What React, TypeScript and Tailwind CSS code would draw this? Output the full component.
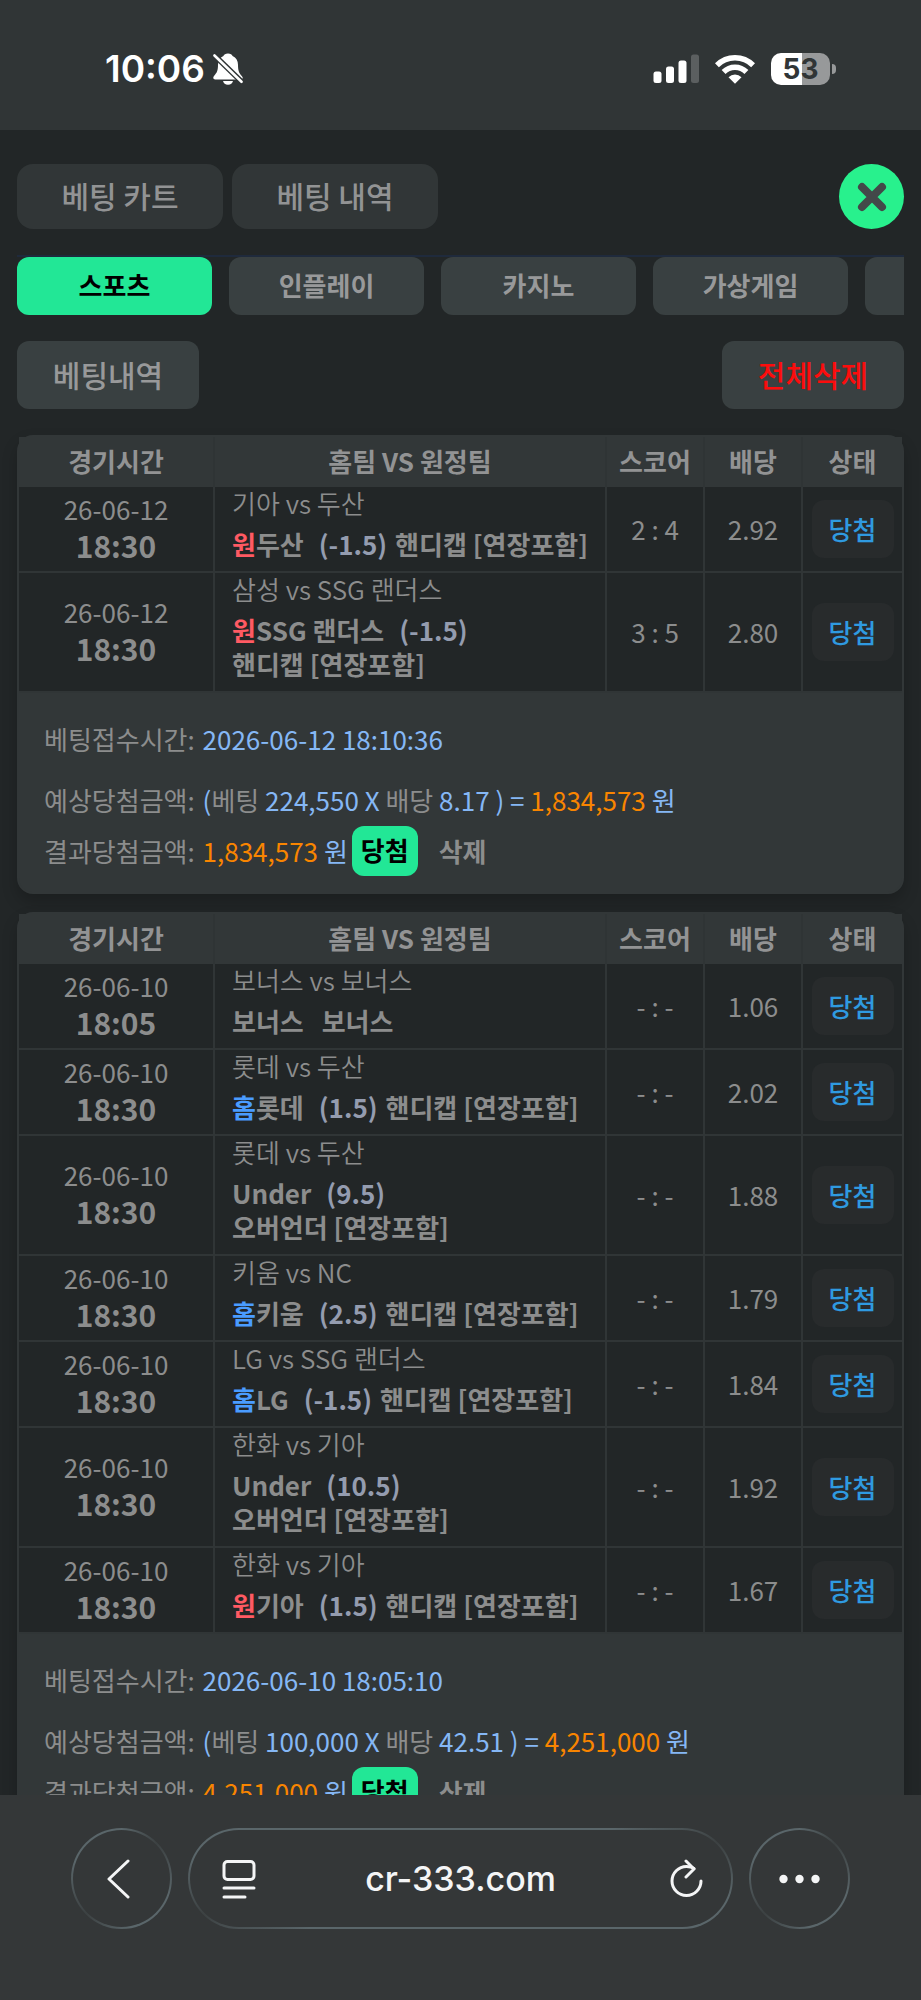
import { clsx } from "clsx";

type Side = "home" | "away";

type Pick = {
  date: string;
  time: string;
  match: string;
  side?: Side;
  team: string;
  line?: string;
  market: string;
  score: string;
  odds: string;
};

type Slip = {
  picks: Pick[];
  placedAt: string;
  stake: string;
  totalOdds: string;
  payout: string;
};

const HANDICAP = "핸디캡 [연장포함]";
const OVER_UNDER = "오버언더 [연장포함]";

const slips: Slip[] = [
  {
    picks: [
      { date: "26-06-12", time: "18:30", match: "기아 vs 두산", side: "away", team: "두산", line: "(-1.5)", market: HANDICAP, score: "2 : 4", odds: "2.92" },
      { date: "26-06-12", time: "18:30", match: "삼성 vs SSG 랜더스", side: "away", team: "SSG 랜더스", line: "(-1.5)", market: HANDICAP, score: "3 : 5", odds: "2.80" },
    ],
    placedAt: "2026-06-12 18:10:36",
    stake: "224,550",
    totalOdds: "8.17",
    payout: "1,834,573",
  },
  {
    picks: [
      { date: "26-06-10", time: "18:05", match: "보너스 vs 보너스", team: "보너스", market: "보너스", score: "- : -", odds: "1.06" },
      { date: "26-06-10", time: "18:30", match: "롯데 vs 두산", side: "home", team: "롯데", line: "(1.5)", market: HANDICAP, score: "- : -", odds: "2.02" },
      { date: "26-06-10", time: "18:30", match: "롯데 vs 두산", team: "Under", line: "(9.5)", market: OVER_UNDER, score: "- : -", odds: "1.88" },
      { date: "26-06-10", time: "18:30", match: "키움 vs NC", side: "home", team: "키움", line: "(2.5)", market: HANDICAP, score: "- : -", odds: "1.79" },
      { date: "26-06-10", time: "18:30", match: "LG vs SSG 랜더스", side: "home", team: "LG", line: "(-1.5)", market: HANDICAP, score: "- : -", odds: "1.84" },
      { date: "26-06-10", time: "18:30", match: "한화 vs 기아", team: "Under", line: "(10.5)", market: OVER_UNDER, score: "- : -", odds: "1.92" },
      { date: "26-06-10", time: "18:30", match: "한화 vs 기아", side: "away", team: "기아", line: "(1.5)", market: HANDICAP, score: "- : -", odds: "1.67" },
    ],
    placedAt: "2026-06-10 18:05:10",
    stake: "100,000",
    totalOdds: "42.51",
    payout: "4,251,000",
  },
];

const tabs = ["스포츠", "인플레이", "카지노", "가상게임", ""];

function StatusBar() {
  return (
    <div className="flex h-[130px] shrink-0 items-center justify-between bg-[#303536] pt-2 pr-[85px] pl-[105px] font-['Inter',sans-serif] text-white">
      <div className="flex items-center gap-2">
        <span className="text-[37px] leading-10 font-semibold">10:06</span>
        <svg width="30" height="32" viewBox="0 0 30 32">
          <path
            d="M15 0.5c-2.500 0-4 1-4.600 2.400C6.800 4.400 5 7.600 5 11.800c0 6-1.200 8-3.400 10.400C0.600 23.300 0.300 24 0.300 24.700c0 1 0.800 1.700 1.900 1.700h25.600c1.100 0 1.900-0.700 1.900-1.700 0-0.700-0.500-1.400-1.700-2.500C26 19.800 25 17.800 25 11.800c0-4.200-1.800-7.400-5.400-8.900C19 1.500 17.500 0.500 15 0.500z"
            fill="#fff"
          />
          <path d="M10 28h10c-0.500 2.400-2.300 3.800-5 3.800s-4.500-1.400-5-3.800z" fill="#fff" />
          <path d="M-1 0L31 31" stroke="#303536" strokeWidth="5.500" />
          <path d="M1.500 2.500L28.500 28.800" stroke="#fff" strokeWidth="2.600" strokeLinecap="round" />
        </svg>
      </div>
      <div className="flex items-center gap-4">
        <svg width="46" height="30" viewBox="0 0 46 30">
          <rect x="0.500" y="17.500" width="8" height="11.500" rx="2.500" fill="#fff" />
          <rect x="13" y="12.500" width="8" height="16.500" rx="2.500" fill="#fff" />
          <rect x="25.500" y="6.500" width="8" height="22.500" rx="2.500" fill="#fff" />
          <rect x="38" y="0.500" width="8" height="28.500" rx="2.500" fill="#5b5f60" />
        </svg>
        <svg width="40" height="30" viewBox="0 0 40 30">
          <g fill="none" stroke="#fff" strokeWidth="5.500">
            <path d="M1.900 11.200a25.500 25.500 0 0 1 36.200 0" />
            <path d="M8.600 18a16 16 0 0 1 22.800 0" />
          </g>
          <path d="M13.500 23.200a9.200 9.200 0 0 1 13 0L20 29.800z" fill="#fff" />
        </svg>
        <div className="flex items-center gap-[2px]">
          <div className="flex h-8 w-[59px] items-center justify-center rounded-[10px] bg-linear-to-r from-white from-53% to-[#97999a] to-53% text-[28px] leading-8 font-bold text-[#303536]">
            53
          </div>
          <div className="h-[10px] w-1 rounded-r-full bg-[#97999a]" />
        </div>
      </div>
    </div>
  );
}

function PickRow({ pick }: { pick: Pick }) {
  return (
    <tr>
      <td className="border-r-2 border-b-2 border-[#303536] pb-1 text-center align-middle">
        <div className="leading-9">{pick.date}</div>
        <div className="text-[30px] leading-9 font-bold">{pick.time}</div>
      </td>
      <td className="border-r-2 border-b-2 border-[#303536] pr-2 pb-[10px] pl-[17px] align-top">
        <div className="leading-8 font-[350]">{pick.match}</div>
        <div className="mt-2 leading-[34px] font-bold">
          {pick.side === "away" && <span className="text-[#ff5a63]">원</span>}
          {pick.side === "home" && <span className="text-[#4a9cff]">홈</span>}
          <span className="mr-3">{pick.team}</span>
          {pick.line && <span className="mr-[2px] ml-[3px] text-[#949caf]">{pick.line}</span>}{" "}
          <span className="inline-block">{pick.market}</span>
        </div>
      </td>
      <td className="border-r-2 border-b-2 border-[#303536] pb-[2px] text-center">{pick.score}</td>
      <td className="border-r-2 border-b-2 border-[#303536] pb-[2px] text-center">{pick.odds}</td>
      <td className="border-b-2 border-[#303536] align-middle">
        <div className="mx-auto flex h-[58px] w-[82px] items-center justify-center rounded-xl bg-[#282b2c] pb-[2px] font-medium text-[#2f9ae0]">
          당첨
        </div>
      </td>
    </tr>
  );
}

function SlipCard({ slip }: { slip: Slip }) {
  return (
    <section className="rounded-2xl border-2 border-[#323738] bg-[#323738] shadow-[0_8px_16px_rgba(0,0,0,0.2)]">
      <table className="w-full table-fixed border-separate border-spacing-0 bg-[#222627]">
        <thead>
          <tr className="h-[50px] bg-[#323738] text-[#929394]">
            <th className="w-[22.2%] border-r-2 border-[#2f3435] pb-[3px] font-bold">경기시간</th>
            <th className="border-r-2 border-[#2f3435] pb-[3px] font-bold">홈팀 VS 원정팀</th>
            <th className="w-[98px] border-r-2 border-[#2f3435] pb-[3px] font-bold">스코어</th>
            <th className="w-[98px] border-r-2 border-[#2f3435] pb-[3px] font-bold">배당</th>
            <th className="w-[99px] pb-[3px] font-bold">상태</th>
          </tr>
        </thead>
        <tbody>
          {slip.picks.map((pick, i) => (
            <PickRow key={i} pick={pick} />
          ))}
        </tbody>
      </table>
      <div className="px-[25px] pt-[29px] pb-4 leading-[34px]">
        <p>
          <span className="mr-[2px]">베팅접수시간:</span>{" "}
          <span className="text-[#85b7f5]">{slip.placedAt}</span>
        </p>
        <p className="mt-[27px] mb-[9px]">
          <span className="mr-[2px]">예상당첨금액:</span>{" "}
          <span className="text-[#85b7f5]">(</span>베팅{" "}
          <span className="text-[#85b7f5]">{slip.stake} X</span> 배당{" "}
          <span className="text-[#85b7f5]">{slip.totalOdds} ) =</span>{" "}
          <span className="text-[#f98500]">{slip.payout}</span>{" "}
          <span className="text-[#85b7f5]">원</span>
        </p>
        <div className="flex items-center">
          <p>
            <span className="mr-[2px]">결과당첨금액:</span>{" "}
            <span className="text-[#f98500]">{slip.payout}</span>{" "}
            <span className="text-[#85b7f5]">원</span>
          </p>
          <span className="ml-1 flex h-[50px] items-center rounded-xl bg-[#22e796] px-[9px] pb-[2px] font-bold text-black">
            당첨
          </span>
          <button className="ml-[21px] font-bold">삭제</button>
        </div>
      </div>
    </section>
  );
}

function BrowserBar() {
  const circle =
    "flex h-[101px] w-[101px] items-center justify-center rounded-full border-2 border-transparent [background:linear-gradient(#343738,#343738)_padding-box,conic-gradient(#5a666a,#3c4142_45deg,#5a666a_110deg,#5a666a_170deg,#3c4142_225deg,#5a666a_290deg,#5a666a)_border-box]";
  return (
    <nav className="flex h-[205px] shrink-0 gap-4 bg-[#343738] px-[71px] pt-[33px] font-['Inter',sans-serif] text-[#f4f5f6]">
      <button aria-label="뒤로" className={clsx(circle, "pr-2")}>
        <svg width="24" height="40" viewBox="0 0 24 40" fill="none" stroke="currentColor" strokeWidth="3" strokeLinecap="round" strokeLinejoin="round">
          <path d="M22 2L3 20l19 18" />
        </svg>
      </button>
      <div className="flex h-[101px] flex-1 items-center justify-between rounded-full border-2 border-transparent pr-7 pl-8 [background:linear-gradient(#343738,#343738)_padding-box,conic-gradient(#5a666a,#5a666a_72deg,#3c4142_82deg,#5a666a_94deg,#5a666a_252deg,#3c4142_262deg,#5a666a_274deg)_border-box]">
        <button aria-label="페이지 메뉴">
          <svg width="34" height="40" viewBox="0 0 34 40" fill="none" stroke="currentColor" strokeWidth="3" strokeLinecap="round">
            <rect x="2" y="2.500" width="30" height="18" rx="3.500" />
            <path d="M2 29h30M2 38h21" />
          </svg>
        </button>
        <button className="pr-1 text-[34px] leading-10 font-medium">cr-333.com</button>
        <button aria-label="새로고침">
          <svg width="34" height="40" viewBox="0 0 34 40" fill="none" stroke="currentColor" strokeWidth="3" strokeLinecap="round" strokeLinejoin="round">
            <path d="M32 22A14.500 14.500 0 1 1 17.500 7.500c3 0 5.500 0.500 7.500 2" />
            <path d="M17 2l8 8-8 8" />
          </svg>
        </button>
      </div>
      <button aria-label="더보기" className={circle}>
        <svg width="42" height="10" viewBox="0 0 42 10" fill="currentColor">
          <circle cx="4.500" cy="5" r="4.200" />
          <circle cx="20.500" cy="5" r="4.200" />
          <circle cx="36.500" cy="5" r="4.200" />
        </svg>
      </button>
    </nav>
  );
}

export default function App() {
  return (
    <div className="flex h-screen flex-col bg-[#222627] font-['Noto_Sans_CJK_KR',sans-serif] text-[26px] text-[#8c8d8d]">
      <StatusBar />
      <main className="min-h-0 flex-1 overflow-y-auto px-[17px] pt-[34px] [scrollbar-width:none]">
        <header className="flex items-center gap-[9px] text-[30px] font-medium text-[#929394]">
          <button className="h-[65px] w-[206px] rounded-2xl bg-[#313637] pb-[2px]">베팅 카트</button>
          <button className="h-[65px] w-[206px] rounded-2xl bg-[#313637] pb-[2px]">베팅 내역</button>
          <button
            aria-label="닫기"
            className="ml-auto flex h-[65px] w-[65px] items-center justify-center rounded-full bg-[#28f18d]"
          >
            <svg width="30" height="30" viewBox="0 0 30 30" stroke="#434949" strokeWidth="8" strokeLinecap="round">
              <path d="M5 5l20 20M25 5L5 25" />
            </svg>
          </button>
        </header>

        <div className="mt-[26px] flex gap-[17px] overflow-x-auto border-t-2 border-[#1f2a3c] [scrollbar-width:none]">
          {tabs.map((tab, i) => (
            <button
              key={i}
              aria-label={tab || "기타"}
              className={clsx(
                "h-[58px] w-[195px] shrink-0 rounded-xl pb-[3px] font-bold",
                i === 0 ? "bg-[#22e796] text-black" : "bg-[#394041] text-[#98999a]"
              )}
            >
              {tab}
            </button>
          ))}
        </div>

        <div className="mt-[26px] flex justify-between text-[30px] font-medium">
          <button className="h-[68px] w-[182px] rounded-xl bg-[#394041] pb-[2px] text-[#98999a]">베팅내역</button>
          <button className="h-[68px] w-[182px] rounded-xl bg-[#394041] pb-[2px] text-[#fb0d0d]">전체삭제</button>
        </div>

        <div className="mt-[26px] flex flex-col gap-[18px]">
          {slips.map((slip) => (
            <SlipCard key={slip.placedAt} slip={slip} />
          ))}
        </div>
      </main>
      <BrowserBar />
    </div>
  );
}
